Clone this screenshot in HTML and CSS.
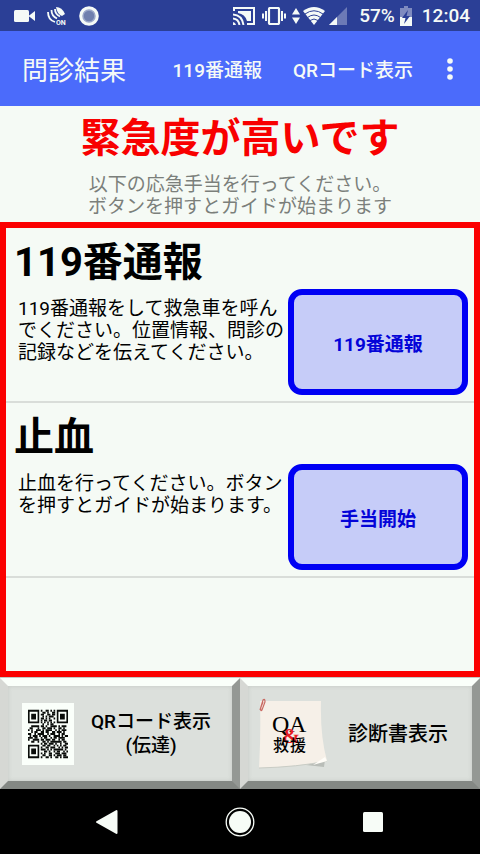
FILE: index.html
```html
<!DOCTYPE html>
<html lang="ja">
<head>
<meta charset="utf-8">
<meta name="viewport" content="width=device-width, initial-scale=1">
<title>問診結果</title>
<link rel="stylesheet" href="styles.css">
</head>
<body>
<div class="status">
  <div class="status-left">
    <svg width="21" height="12" viewBox="0 0 21 12" fill="currentColor"><rect x="0" y="0" width="15" height="12" rx="1.5"/><path d="M14.5 6L21 1v10z"/></svg>
    <svg width="20" height="20" viewBox="0 0 20 20" fill="none" stroke="currentColor" stroke-width="1.800"><path d="M1 6Q1 14 8 16M4.500 4Q4.500 10 10 12.500M8 3Q8 8 13 10.500"/><path d="M9 1Q15 1 18 8L15 10Q10 8 9 1z" fill="currentColor" stroke="none"/><text class="tiny" x="9" y="19" fill="currentColor" stroke="none">ON</text></svg>
    <svg width="20" height="20" viewBox="0 0 20 20"><circle cx="10" cy="10" r="9.800" fill="#f5faf7"/><circle cx="10" cy="10" r="6" fill="#6f7fae"/><circle cx="10" cy="10" r="6" fill="none" stroke="#9aa7c9" stroke-width="1.500"/></svg>
  </div>
  <div class="status-right">
    <svg class="cast" width="22" height="18" viewBox="0 0 22 18" fill="none" stroke="currentColor" stroke-width="2"><path d="M1 4V1h20v16h-7"/><path d="M5 4h13v10h-4Q12 7 5 6z" fill="currentColor" stroke="none"/><path d="M0 7.500Q9 8 10.500 18M0 11.500Q5.500 12 6.500 18"/><path d="M0 15v3h3Q2.500 15.500 0 15z" fill="currentColor" stroke="none"/></svg>
    <svg class="vibrate" width="24" height="18" viewBox="0 0 24 18" fill="none" stroke="currentColor" stroke-width="2"><rect x="7" y="1" width="10" height="16" rx="1" stroke-width="2.200"/><path d="M4 4v10M1 6.500v5M20 4v10M23 6.500v5"/></svg>
    <svg class="arrows" width="8" height="18" viewBox="0 0 8 18" fill="currentColor"><path d="M4 1l4 6.500H0zM4 17l4-6.500H0z"/></svg>
    <svg class="wifi" width="22" height="18" viewBox="0 0 22 18"><path d="M0 4Q11-4 22 4L11 18z" fill="currentColor"/><path d="M2 7Q11 .5 20 7M4.500 10.500Q11 5.500 17.500 10.500M7 13.500Q11 10.500 15 13.500" fill="none" stroke="#2b3f96" stroke-width="1"/></svg>
    <svg class="signal" width="18" height="18" viewBox="0 0 18 18"><path d="M18 0v18H0z" fill="#6c7ab6"/><path d="M8 10v8H0z" fill="currentColor"/></svg>
    <span>57%</span>
    <svg class="battery" width="12" height="20" viewBox="0 0 12 20"><path d="M4 0h4v2h4v18H0V2h4z" fill="#7f8bc0"/><path d="M0 11h12v9H0z" fill="currentColor"/><path d="M8 4L2 12h3.500L4 18l6-8H6.500z" fill="#2b3f96"/></svg>
    <time>12:04</time>
  </div>
</div>
<header class="appbar">
  <h1>問診結果</h1>
  <button class="action" type="button">119番通報</button>
  <button class="action" type="button">QRコード表示</button>
  <button class="more" type="button" aria-label="メニュー"><svg width="6" height="22" viewBox="0 0 6 22" fill="currentColor"><circle cx="3" cy="3" r="2.800"/><circle cx="3" cy="11" r="2.800"/><circle cx="3" cy="19" r="2.800"/></svg></button>
</header>
<section class="summary">
  <h2>緊急度が高いです</h2>
  <p>以下の応急手当を行ってください。<br>ボタンを押すとガイドが始まります</p>
</section>
<main class="list">
  <article class="item">
    <h3>119番通報</h3>
    <div class="item-row">
      <p>119番通報をして救急車を呼んでください。位置情報、問診の記録などを伝えてください。</p>
      <button class="go" type="button">119番通報</button>
    </div>
  </article>
  <article class="item">
    <h3>止血</h3>
    <div class="item-row">
      <p>止血を行ってください。ボタンを押すとガイドが始まります。</p>
      <button class="go" type="button">手当開始</button>
    </div>
  </article>
</main>
<div class="tools">
  <button class="tool tool-qr" type="button">
    <svg width="52" height="62" viewBox="-3.750 -3.500 32.500 32" preserveAspectRatio="none">
      <rect x="-3.750" y="-3.500" width="32.500" height="32" fill="#fafffa"/>
      <g fill="none" stroke="#0a0d0a" stroke-width="1.020">
        <path d="M.5.500h6v6h-6zM18.500.500h6v6h-6zM.5 18.500h6v6h-6z"/>
        <path d="M2 3.500h3M20 3.500h3M2 21.500h3" stroke-width="3"/>
        <path d="M8 .5h9" stroke-dasharray="1 2 2 1 1 1 1 5"/>
        <path d="M9 1.500h8" stroke-dasharray="2 1 1 2 2 5"/>
        <path d="M8 2.500h9" stroke-dasharray="2 2 2 1 2 5"/>
        <path d="M9 3.500h8" stroke-dasharray="1 1 1 1 3 5"/>
        <path d="M8 4.500h9" stroke-dasharray="2 1 1 1 1 2 1 5"/>
        <path d="M8 5.500h9" stroke-dasharray="1 1 2 1 2 5"/>
        <path d="M8 6.500h9" stroke-dasharray="1 1"/>
        <path d="M9 7.500h8" stroke-dasharray="1 2 1 1 2 5"/>
        <path d="M2 8.500h23" stroke-dasharray="5 1 2 1 1 2 4 1 1 1 3 5"/>
        <path d="M1 9.500h24" stroke-dasharray="2 3 1 2 2 1 3 1 1 2 2 1 1 2"/>
        <path d="M0 10.500h25" stroke-dasharray="1 1 1 2 3 1 1 1 4 2 1 1 1 1 3 5"/>
        <path d="M2 11.500h23" stroke-dasharray="1 1 2 2 2 1 2 2 2 1 3 1 1 5"/>
        <path d="M0 12.500h25" stroke-dasharray="2 2 1 1 4 2 1 1 3 2 1 1 2 5"/>
        <path d="M1 13.500h24" stroke-dasharray="1 1 3 1 1 1 3 1 1 2 4 1 1 1 2"/>
        <path d="M0 14.500h25" stroke-dasharray="3 1 2 2 1 1 2 2 1 1 2 1 4 5"/>
        <path d="M0 15.500h25" stroke-dasharray="1 2 4 1 2 1 3 1 2 2 1 1 2 5"/>
        <path d="M2 16.500h23" stroke-dasharray="2 2 1 2 2 1 1 1 7 1 2 5"/>
        <path d="M8 17.500h17" stroke-dasharray="1 1 2 1 3 1 1 2 1 2 2 5"/>
        <path d="M9 18.500h16" stroke-dasharray="2 1 2 2 1 1 1 1 1 1 2 5"/>
        <path d="M8 19.500h17" stroke-dasharray="1 2 2 1 3 2 1 1 1 1 2"/>
        <path d="M8 20.500h17" stroke-dasharray="3 1 1 1 1 1 6 1 1 5"/>
        <path d="M10 21.500h15" stroke-dasharray="2 1 1 2 1 1 2 2 1 1 1"/>
        <path d="M8 22.500h17" stroke-dasharray="1 1 1 2 2 2 3 1 3 5"/>
        <path d="M9 23.500h16" stroke-dasharray="2 2 2 1 1 1 3 1 2 5"/>
        <path d="M8 24.500h17" stroke-dasharray="1 2 2 1 1 2 2 1 1 1 3"/>
      </g>
    </svg>
    <span>QRコード表示<br>(伝達)</span>
  </button>
  <button class="tool tool-doc" type="button">
    <svg width="70" height="72" viewBox="0 0 70 72">
      <path d="M48 67L67 62L66 69z" fill="#b9bdb8"/>
      <path d="M2 3L63 3Q62 38 69 63Q38 69 1 70Q3 35 2 3z" fill="#f6f0e8"/>
      <path d="M1 70Q40 69 69 63" fill="none" stroke="#c9ccc5"/>
      <path d="M55 67L69 63L67 59z" fill="#fffdf8"/>
      <path d="M2 12L5 2Q7 0 7 4L4 12Q2 14 3 9L5 4" fill="none" stroke="#c96a63" stroke-width="1.200"/>
      <text class="seal-latin" x="14" y="34">Q</text>
      <text class="seal-latin" x="31" y="34">A</text>
      <text class="seal-amp" x="24" y="45">&amp;</text>
      <text class="seal-kanji" x="15" y="53">救</text>
      <text class="seal-kanji" x="32" y="53">援</text>
    </svg>
    <span>診断書表示</span>
  </button>
</div>
<nav class="softkeys">
  <button type="button" aria-label="戻る"><svg width="32" height="32" viewBox="0 0 32 32"><path d="M6 16L25.500 5v22z" fill="#f7fcf7" stroke="#f7fcf7" stroke-width="2" stroke-linejoin="round"/></svg></button>
  <button type="button" aria-label="ホーム"><svg width="32" height="32" viewBox="0 0 32 32"><circle cx="16" cy="16" r="13.800" fill="none" stroke="#f7fcf7" stroke-width="1.300"/><circle cx="16" cy="16" r="11" fill="#f7fcf7"/></svg></button>
  <button type="button" aria-label="履歴"><svg width="32" height="32" viewBox="0 0 32 32"><rect x="6" y="6" width="20" height="20" rx="1.500" fill="#f7fcf7"/></svg></button>
</nav>
</body>
</html>
```
FILE: styles.css
```css
* { box-sizing: border-box; }

body {
  margin: 0;
  min-height: 100vh;
  display: flex;
  flex-direction: column;
  background: #f5faf5;
  color: #000;
  font-family: Roboto, "Noto Sans CJK JP", sans-serif;
}

h1, h2, h3, p { margin: 0; }

button {
  margin: 0;
  padding: 0;
  border: 0;
  background: none;
  color: inherit;
  font: inherit;
}

svg { display: block; flex: none; }

.status {
  display: flex;
  justify-content: space-between;
  height: 31px;
  padding: 0 10px 0 14px;
  background: #2b3f96;
  color: #f5faf7;
  font-size: 19px;
  font-weight: 500;
}

.status-left, .status-right { display: flex; align-items: center; }
.status-left { gap: 12px; }
.cast { margin-right: 7px; }
.vibrate { margin-right: 6px; }
.arrows { margin-right: 3px; }
.wifi { margin-right: 4px; }
.signal { margin-right: 12px; }
.battery { margin: 0 10px 0 5px; }
.tiny { font-size: 7px; font-weight: 700; }

.appbar {
  display: flex;
  align-items: center;
  height: 75px;
  padding: 0 24px 0 22px;
  background: #4b6bfb;
  color: #f5faf7;
}

.appbar h1 {
  margin-right: auto;
  font-size: 26px;
  font-weight: 400;
  white-space: nowrap;
}

.action {
  margin-right: 31px;
  font-size: 19px;
  font-weight: 500;
  white-space: nowrap;
}

.more { padding: 0 3px; }

.summary {
  height: 116px;
  padding-top: 8px;
  text-align: center;
}

.summary h2 {
  color: #f80000;
  font-size: 40px;
  line-height: 50px;
  font-weight: 700;
}

.summary p {
  padding-top: 10px;
  color: #7b7f7b;
  font-size: 19px;
  line-height: 22px;
}

.list {
  flex: 1;
  border: 6px solid #fb0000;
}

.item {
  height: 175px;
  padding: 8px 6px 0 8px;
  border-bottom: 2px solid #d9ddd9;
}

.item h3 {
  font-size: 40px;
  line-height: 53px;
  font-weight: 700;
}

.item-row { display: flex; }

.item-row p {
  width: 274px;
  padding: 9px 0 0 4px;
  font-size: 19px;
  line-height: 22px;
}

.go {
  flex: 1;
  height: 106px;
  border: 6px solid #0000f4;
  border-radius: 14px;
  background: #c6ccf8;
  color: #0404d8;
  font-size: 19px;
  font-weight: 700;
}

.tools {
  display: grid;
  grid-template-columns: 1fr 1fr;
  height: 112px;
  padding-top: 1px;
  background: #c4c8c4;
}

.tool {
  display: flex;
  align-items: center;
  padding: 0;
  border: 8px solid;
  border-color: #fafffa #949894 #848884 #d6d8d4;
  background: #dce0dc;
  box-shadow: inset 0 0 4px #c4c8c4;
  line-height: 24px;
  font-weight: 500;
}

.tool span { flex: none; }
.tool-qr { padding-left: 14px; gap: 17px; font-size: 19px; }
.tool-doc { padding-left: 10px; gap: 20px; font-size: 20px; }

.seal-latin { font: 24px "Liberation Serif", serif; }
.seal-amp { font: bold 22px "Liberation Serif", serif; fill: #e81c24; }
.seal-kanji { font: 500 16px "Noto Sans CJK JP", sans-serif; }

.softkeys {
  display: flex;
  justify-content: center;
  gap: 53px;
  height: 65px;
  background: #000;
}

.softkeys button { padding: 0 24px; }
```
